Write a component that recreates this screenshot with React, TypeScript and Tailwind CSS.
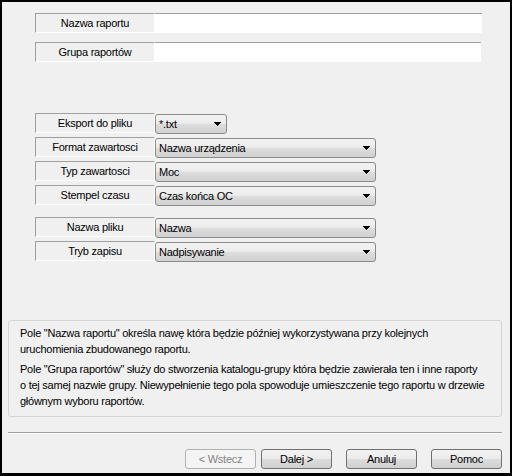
import React from "react";

const font = { fontFamily: '"Liberation Sans", Arial, sans-serif' };

function Label({ text }: { text: string }) {
  return (
    <div className="w-[120px] h-[20px] shrink-0 border-t border-l border-b border-r border-t-[#a0a0a0] border-l-[#a0a0a0] border-b-white border-r-white flex items-center justify-center text-black">
      {text}
    </div>
  );
}

function Arrow() {
  return (
    <svg width="7" height="4" viewBox="0 0 7 4" className="shrink-0">
      <path d="M0 0H7V1H6V2H5V3H4V4H3V3H2V2H1V1H0Z" fill="#000" />
    </svg>
  );
}

function Combo({ value, wide }: { value: string; wide?: boolean }) {
  return (
    <div
      className={
        (wide ? "w-[221px] " : "w-[72px] ") +
        "h-[20px] mt-[1px] rounded-[3px] border border-[#8a8a8a] bg-[linear-gradient(#f2f2f2_0%,#ebebeb_50%,#dddddd_50%,#d2d2d2_100%)] flex items-center justify-between pl-[3px] pr-[5px] text-black"
      }
    >
      <span className="whitespace-nowrap">{value}</span>
      <Arrow />
    </div>
  );
}

function Row({ label, value, wide = true }: { label: string; value: string; wide?: boolean }) {
  return (
    <div className="flex items-start h-[20px]">
      <Label text={label} />
      <Combo value={value} wide={wide} />
    </div>
  );
}

function Btn({ text, disabled }: { text: string; disabled?: boolean }) {
  return (
    <div
      className={
        disabled
          ? "w-[71px] h-[20px] rounded-[3px] border border-[#adb2b5] bg-[#f4f4f4] flex items-center justify-center text-[#838383]"
          : "w-[71px] h-[20px] rounded-[3px] border border-[#707070] bg-[linear-gradient(#f2f2f2_0%,#ebebeb_50%,#dddddd_50%,#cfcfcf_100%)] flex items-center justify-center text-black"
      }
    >
      {text}
    </div>
  );
}

export default function App() {
  return (
    <div
      className="w-[512px] h-[476px] bg-black pt-[2px] pl-[2px] pr-[2px] pb-[3px] flex text-[11px] leading-[16px] tracking-[-0.25px]"
      style={font}
    >
      <div className="flex-1 bg-[#f0f0f0] flex flex-col pt-[11px]">
        <div className="flex pl-[33px]">
          <Label text="Nazwa raportu" />
          <div className="w-[327px] h-[20px] bg-white border-t border-[#a0a0a0]" />
        </div>
        <div className="flex pl-[33px] mt-[9px]">
          <Label text="Grupa raportów" />
          <div className="w-[326px] h-[20px] bg-white border-t border-[#a0a0a0]" />
        </div>

        <div className="flex flex-col gap-[4px] pl-[33px] mt-[51px]">
          <Row label="Eksport do pliku" value="*.txt" wide={false} />
          <Row label="Format zawartosci" value="Nazwa urządzenia" />
          <Row label="Typ zawartosci" value="Moc" />
          <Row label="Stempel czasu" value="Czas końca OC" />
        </div>
        <div className="flex flex-col gap-[4px] pl-[33px] mt-[12px]">
          <Row label="Nazwa pliku" value="Nazwa" />
          <Row label="Tryb zapisu" value="Nadpisywanie" />
        </div>

        <div className="ml-[6px] w-[494px] h-[97px] mt-[59px] border border-[#d5d5d5] rounded-[3px] pl-[11px] pt-[4px] text-black">
          <p className="whitespace-nowrap">
            Pole "Nazwa raportu" określa nawę która będzie później wykorzystywana przy kolejnych
            <br />
            uruchomienia zbudowanego raportu.
          </p>
          <p className="whitespace-nowrap mt-[4px]">
            Pole "Grupa raportów" służy do stworzenia katalogu-grupy która będzie zawierała ten i inne raporty
            <br />
            o tej samej nazwie grupy. Niewypełnienie tego pola spowoduje umieszczenie tego raportu w drzewie
            <br />
            głównym wyboru raportów.
          </p>
        </div>

        <div className="ml-[6px] w-[494px] mt-[15px] h-[2px] border-t border-[#a0a0a0] border-b border-b-white" />

        <div className="flex justify-end pr-[8px] mt-[15px]">
          <Btn text="< Wstecz" disabled />
          <div className="w-[5px]" />
          <Btn text="Dalej >" />
          <div className="w-[14px]" />
          <Btn text="Anuluj" />
          <div className="w-[14px]" />
          <Btn text="Pomoc" />
        </div>
      </div>
    </div>
  );
}
